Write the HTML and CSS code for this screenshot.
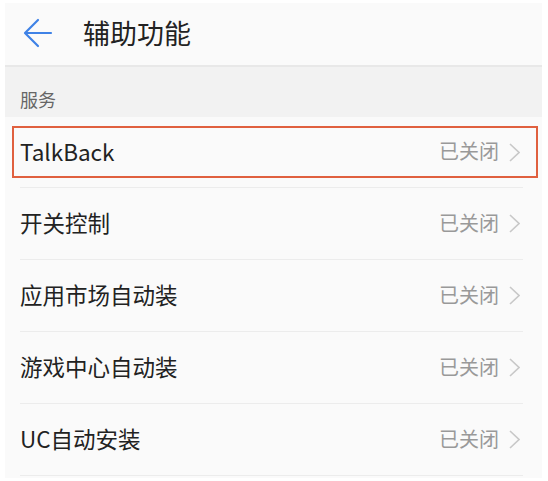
FILE: index.html
```html
<!DOCTYPE html>
<html lang="zh-CN">
<head>
<meta charset="utf-8">
<link rel="stylesheet" href="styles.css">
</head>
<body>
<div class="screen">
  <header class="header">
    <svg class="back" width="30" height="30" viewBox="0 0 30 30"><path d="M28 15H3M15 2L2 15L15 28" fill="none" stroke="#3f82e6" stroke-width="2.2" stroke-linecap="round" stroke-linejoin="round"/></svg>
    <span class="title">辅助功能</span>
  </header>
  <div class="section">服务</div>
  <ul class="list">
    <li class="row highlight"><span class="label">TalkBack</span><span class="status">已关闭</span><svg class="chev" width="11" height="19" viewBox="0 0 11 19"><path d="M1 1L10 9.5L1 18" fill="none" stroke="#c8c8c8" stroke-width="1.6"/></svg></li>
    <li class="row"><span class="label">开关控制</span><span class="status">已关闭</span><svg class="chev" width="11" height="19" viewBox="0 0 11 19"><path d="M1 1L10 9.5L1 18" fill="none" stroke="#c8c8c8" stroke-width="1.6"/></svg></li>
    <li class="row"><span class="label">应用市场自动装</span><span class="status">已关闭</span><svg class="chev" width="11" height="19" viewBox="0 0 11 19"><path d="M1 1L10 9.5L1 18" fill="none" stroke="#c8c8c8" stroke-width="1.6"/></svg></li>
    <li class="row"><span class="label">游戏中心自动装</span><span class="status">已关闭</span><svg class="chev" width="11" height="19" viewBox="0 0 11 19"><path d="M1 1L10 9.5L1 18" fill="none" stroke="#c8c8c8" stroke-width="1.6"/></svg></li>
    <li class="row"><span class="label">UC自动安装</span><span class="status">已关闭</span><svg class="chev" width="11" height="19" viewBox="0 0 11 19"><path d="M1 1L10 9.5L1 18" fill="none" stroke="#c8c8c8" stroke-width="1.6"/></svg></li>
  </ul>
</div>
</body>
</html>
```
FILE: styles.css
```css
html, body {
  margin: 0;
  padding: 0;
  background: #ffffff;
}
body {
  font-family: "Noto Sans CJK SC", "Noto Sans", sans-serif;
}
.screen {
  margin: 3px 6px 0 5px;
  height: 475px;
  background: #fafafa;
  overflow: hidden;
}
.header {
  height: 62px;
  display: flex;
  align-items: center;
  padding-left: 18px;
  border-bottom: 2px solid #e8e8e8;
}
.back {
  display: block;
  margin-top: -2px;
}
.title {
  margin-left: 30px;
  font-size: 27px;
  color: #222;
  line-height: 1;
  margin-top: -4px;
}
.section {
  height: 50px;
  background: #f2f2f2;
  box-sizing: border-box;
  padding: 20px 0 0 15px;
  font-size: 18px;
  line-height: 24px;
  color: #666;
}
.list {
  list-style: none;
  margin: 0;
  padding: 0;
}
.row {
  position: relative;
  height: 72px;
  box-sizing: border-box;
  margin: 0 19px 0 15px;
  border-bottom: 1px solid #ececec;
  display: flex;
  align-items: center;
}
.row:first-child {
  height: 71px;
}
.label {
  flex: 1;
  font-size: 22.5px;
  color: #222;
  line-height: 1;
  margin-top: -2px;
}
.status {
  font-size: 20px;
  color: #999;
  line-height: 1;
  margin-top: -2px;
}
.chev {
  display: block;
  margin-left: 10px;
  margin-right: 3px;
}
.highlight::after {
  content: "";
  position: absolute;
  left: -8px;
  right: -15px;
  top: 9px;
  height: 52px;
  border: 2px solid #e0603f;
  box-sizing: border-box;
}
```
